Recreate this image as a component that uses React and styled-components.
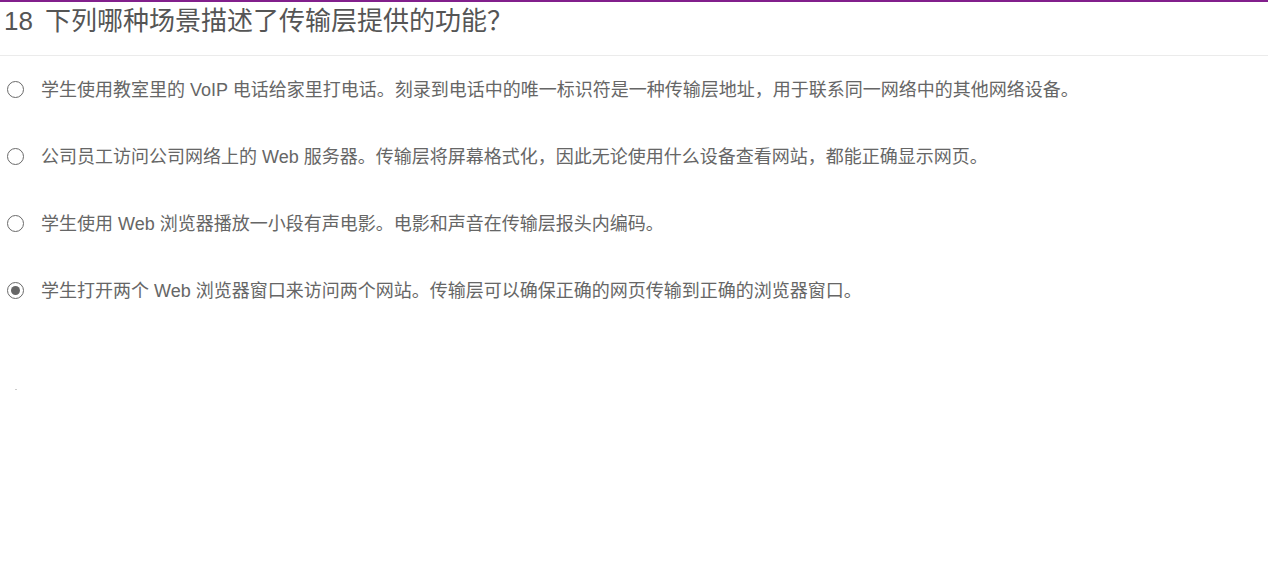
import styled, { createGlobalStyle } from "styled-components";

const GlobalStyle = createGlobalStyle`
  body {
    margin: 0;
    background: #fff;
    font-family: "Liberation Sans", "Noto Sans CJK SC", sans-serif;
  }
`;

const options = [
  { text: "学生使用教室里的 VoIP 电话给家里打电话。刻录到电话中的唯一标识符是一种传输层地址，用于联系同一网络中的其他网络设备。", checked: false },
  { text: "公司员工访问公司网络上的 Web 服务器。传输层将屏幕格式化，因此无论使用什么设备查看网站，都能正确显示网页。", checked: false },
  { text: "学生使用 Web 浏览器播放一小段有声电影。电影和声音在传输层报头内编码。", checked: false },
  { text: "学生打开两个 Web 浏览器窗口来访问两个网站。传输层可以确保正确的网页传输到正确的浏览器窗口。", checked: true },
];

const App = () => {
  return (
    <>
      <GlobalStyle />
      <Page>
        <Header>
          <Title>
            <Num>18</Num>
            下列哪种场景描述了传输层提供的功能？
          </Title>
        </Header>
        <List>
          {options.map((o, i) => (
            <Row key={i}>
              <Radio checked={o.checked} />
              <Label>{o.text}</Label>
            </Row>
          ))}
        </List>
        <Footer>
          <Dot />
        </Footer>
      </Page>
    </>
  );
};

export default App;

const Page = styled.main`
  border-top: 2px solid #821f8c;
  min-height: 574px;
`;

const Header = styled.header`
  border-bottom: 1px solid #ebebeb;
  padding: 0 4px 15px;
`;

const Title = styled.h1`
  margin: 0;
  font-weight: normal;
  font-size: 26px;
  line-height: 38px;
  color: #555;
`;

const Num = styled.span`
  margin-right: 12px;
`;

const List = styled.div`
  display: flex;
  flex-direction: column;
`;

const Row = styled.label`
  display: flex;
  align-items: center;
  height: 67px;
  padding-left: 7px;
  gap: 17px;
`;

const Radio = styled.span`
  width: 17px;
  height: 17px;
  box-sizing: border-box;
  border-radius: 50%;
  border: 1.6px solid #6a6a6a;
  display: flex;
  align-items: center;
  justify-content: center;
  flex-shrink: 0;

  &::after {
    content: "";
    width: 9px;
    height: 9px;
    border-radius: 50%;
    background: #666;
    display: ${(p) => (p.checked ? "block" : "none")};
  }
`;

const Label = styled.span`
  font-size: 18px;
  color: #666;
  line-height: 24px;
`;

const Footer = styled.div`
  padding: 65px 0 0 15px;
`;

const Dot = styled.div`
  width: 2px;
  height: 1px;
  background: #ccc;
`;
